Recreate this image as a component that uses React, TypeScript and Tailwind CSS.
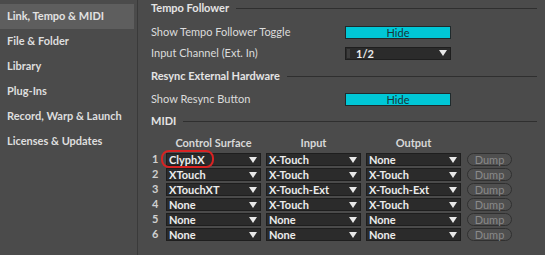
const navItems = [
  "Link, Tempo & MIDI",
  "File & Folder",
  "Library",
  "Plug-Ins",
  "Record, Warp & Launch",
  "Licenses & Updates",
];

const midiRows = [
  { surface: "ClyphX", input: "X-Touch", output: "None" },
  { surface: "XTouch", input: "X-Touch", output: "X-Touch" },
  { surface: "XTouchXT", input: "X-Touch-Ext", output: "X-Touch-Ext" },
  { surface: "None", input: "X-Touch", output: "X-Touch" },
  { surface: "None", input: "None", output: "None" },
  { surface: "None", input: "None", output: "None" },
];

function Arrow() {
  return (
    <svg width="8" height="6" viewBox="0 0 8 6" className="shrink-0">
      <path d="M0 0 H8 L4 6 Z" fill="#e8e8e8" />
    </svg>
  );
}

function Select({ value, width = "w-[95px]" }: { value: string; width?: string }) {
  return (
    <div
      className={`${width} flex h-[13px] items-center justify-between border border-[#1e1e1e] bg-[#2b2b2b] pl-[2px] pr-[3px] text-[11px] font-bold leading-none text-[#ececec]`}
    >
      <span>{value}</span>
      <Arrow />
    </div>
  );
}

function Section({ title }: { title: string }) {
  return (
    <div className="flex h-4 items-center gap-[7px]">
      <span className="text-[11px] font-bold text-[#e4e4e4]">{title}</span>
      <div className="h-px flex-1 bg-[#2f2f2f]" />
    </div>
  );
}

function HideButton() {
  return (
    <div className="flex h-[13px] w-[106px] items-center justify-center border border-[#1f2a2c] bg-[#00c7d6] text-[11px] leading-none text-[#18363a]">
      Hide
    </div>
  );
}

export default function App() {
  return (
    <div
      className="flex h-[255px] w-[545px] overflow-hidden bg-[#4b4b4b]"
      style={{ fontFamily: "Lato, 'Open Sans', sans-serif" }}
    >
      <aside className="w-[138px] shrink-0 border-r border-[#3a3a3a] bg-[#4b4b4b] pt-[4px]">
        {navItems.map((item, i) => (
          <div
            key={item}
            className={`flex h-[25px] w-[134px] items-center pl-[7px] text-[11px] font-bold ${
              i === 0 ? "bg-[#5e5e5e] text-[#e2e2e2]" : "text-[#dedede]"
            }`}
          >
            {item}
          </div>
        ))}
      </aside>

      <main className="flex-1 pl-[13px] pr-[8px] text-[11px] text-[#dcdcdc]">
        <Section title="Tempo Follower" />
        <div className="mt-[8px] flex h-4 items-center">
          <span className="w-[194px]">Show Tempo Follower Toggle</span>
          <HideButton />
        </div>
        <div className="mt-[5px] flex h-4 items-center">
          <span className="w-[194px]">Input Channel (Ext. In)</span>
          <div className="flex h-[13px] w-[106px] items-center justify-between border border-[#1e1e1e] bg-[#2b2b2b] pr-[3px] font-bold leading-none text-[#ececec]">
            <div className="flex items-center">
              <div className="ml-[1px] h-[9px] w-[3px] bg-[#3e3e3e]" />
              <span className="ml-[6px]">1/2</span>
            </div>
            <Arrow />
          </div>
        </div>
        <div className="mt-[7px]">
          <Section title="Resync External Hardware" />
        </div>
        <div className="mt-[7px] flex h-4 items-center">
          <span className="w-[194px]">Show Resync Button</span>
          <HideButton />
        </div>
        <div className="mt-[6px]">
          <Section title="MIDI" />
        </div>

        <div className="mt-[6px] flex h-4 items-center font-bold text-[#d8d8d8]">
          <span className="w-[15px]" />
          <span className="w-[95px] text-center">Control Surface</span>
          <span className="ml-[5px] w-[95px] text-center">Input</span>
          <span className="ml-[5px] w-[95px] text-center">Output</span>
        </div>

        <div className="mt-[1px]">
          {midiRows.map((row, i) => (
            <div key={i} className="relative flex h-[15px] items-center">
              <span className="w-[15px] pl-[1px] font-bold text-[#d0d0d0]">{i + 1}</span>
              <Select value={row.surface} />
              <div className="ml-[5px]">
                <Select value={row.input} />
              </div>
              <div className="ml-[5px]">
                <Select value={row.output} />
              </div>
              <div className="ml-[6px] flex h-[13px] w-[45px] items-center justify-center rounded-full border border-[#303030] bg-[#4f4f4f] text-[11px] leading-none text-[#8a8a8a]">
                Dump
              </div>
              {i === 0 && (
                <div className="absolute left-[10px] top-[-2px] h-[18px] w-[53px] rounded-[8px] border-2 border-[#d82323]" />
              )}
            </div>
          ))}
        </div>
      </main>
    </div>
  );
}
